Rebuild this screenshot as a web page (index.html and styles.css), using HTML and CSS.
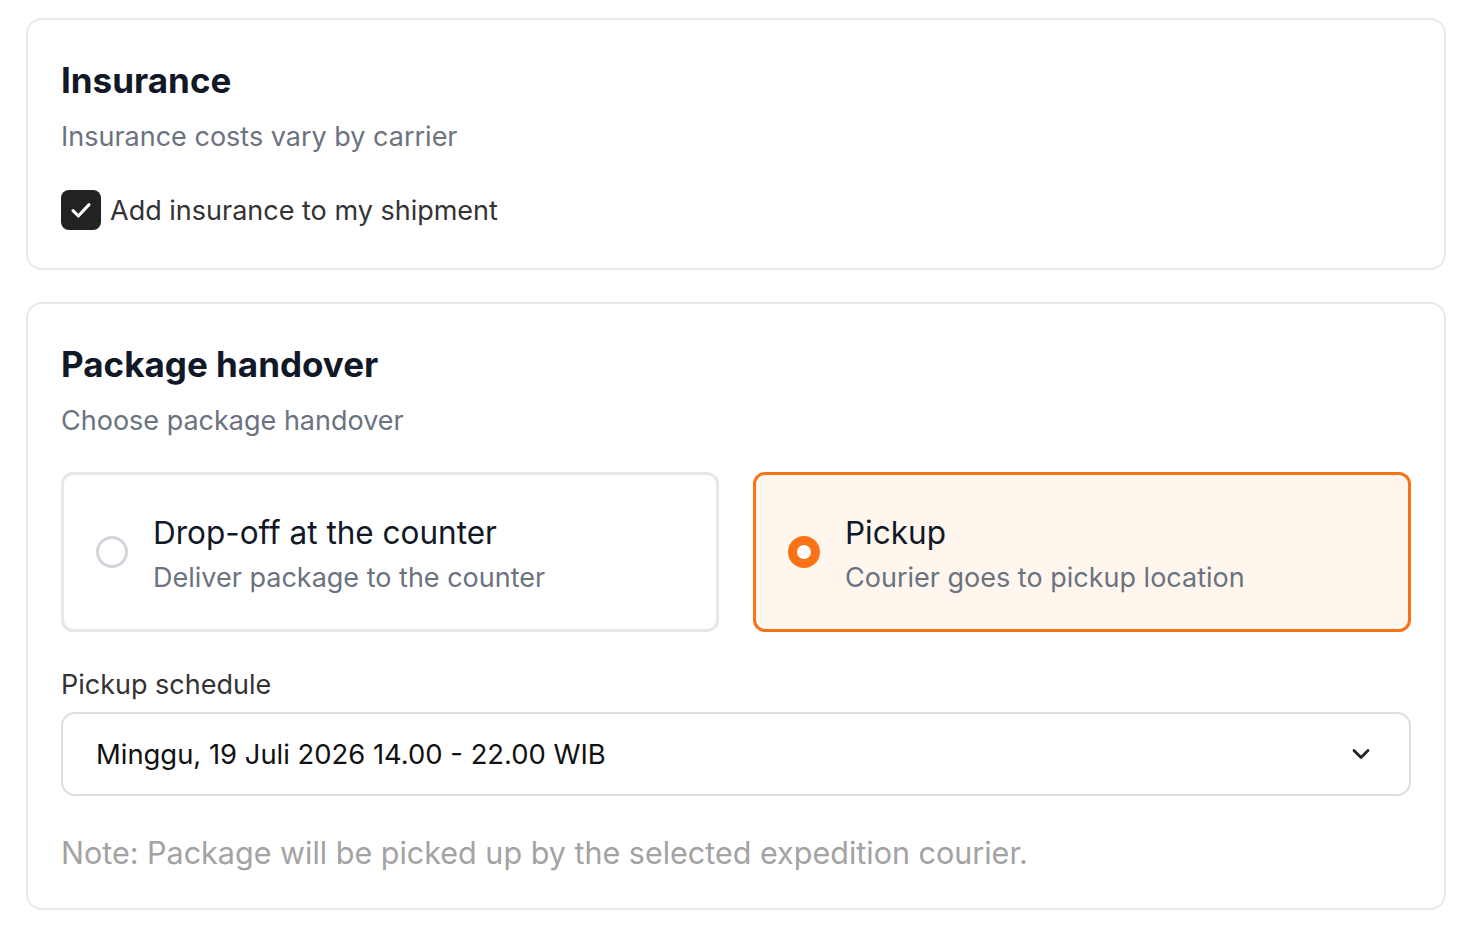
FILE: index.html
```html
<!DOCTYPE html>
<html>

<head>
    <meta charset="utf-8">
    <title>Shipment options</title>
    <link rel="stylesheet" href="styles.css">
</head>

<body>
    <div class="page">
        <div class="card">
            <div class="card-title">Insurance</div>
            <div class="card-subtitle">Insurance costs vary by carrier</div>

            <label class="checkbox">
                <span class="checkbox-box">
                    <svg viewBox="0 0 24 24" width="32" height="32">
                        <path d="M6 12.5l4 4L18 8" fill="none" stroke="white" stroke-width="2.3"
                            stroke-linecap="round" stroke-linejoin="round" />
                    </svg>
                </span>
                <span class="checkbox-label">Add insurance to my shipment</span>
            </label>
        </div>

        <div class="card">
            <div class="card-title">Package handover</div>
            <div class="card-subtitle">Choose package handover</div>

            <div class="options">
                <div class="option">
                    <span class="radio"></span>
                    <div class="option-text">
                        <div class="option-title">Drop-off at the counter</div>
                        <div class="option-desc">Deliver package to the counter</div>
                    </div>
                </div>
                <div class="option selected">
                    <span class="radio"></span>
                    <div class="option-text">
                        <div class="option-title">Pickup</div>
                        <div class="option-desc">Courier goes to pickup location</div>
                    </div>
                </div>
            </div>

            <div class="field-label">Pickup schedule</div>
            <div class="select">
                <span>Minggu, 19 Juli 2026 14.00 - 22.00 WIB</span>
                <svg viewBox="0 0 24 24" width="28" height="28">
                    <path d="M6 9l6 6 6-6" fill="none" stroke="#222" stroke-width="2.4" stroke-linecap="round"
                        stroke-linejoin="round" />
                </svg>
            </div>

            <div class="note">Note: Package will be picked up by the selected expedition courier.</div>
        </div>
    </div>
</body>

</html>
```

FILE: styles.css
```css
body {
    margin: 0;
    font-family: Inter, 'Noto Sans', sans-serif;
    background: white;
    color: #111827;
}

.page {
    display: flex;
    flex-direction: column;
    gap: 32px;
    padding: 18px 30px 20px 26px;
}

.card {
    border: 2px solid #e5e7eb;
    border-radius: 16px;
    padding: 38px 33px;
}

.card-title {
    font-size: 35px;
    font-weight: 700;
    line-height: 44px;
    color: #111827;
}

.card-subtitle {
    font-size: 27px;
    line-height: 36px;
    color: #6b7280;
    margin-top: 17px;
}

.checkbox {
    display: flex;
    align-items: center;
    gap: 9px;
    margin-top: 35px;
}

.checkbox-box {
    width: 40px;
    height: 40px;
    border-radius: 8px;
    background: #222;
    display: flex;
    align-items: center;
    justify-content: center;
}

.checkbox-label {
    font-size: 27px;
    color: #333;
}

.options {
    display: grid;
    grid-template-columns: 1fr 1fr;
    gap: 34px;
    margin-top: 33px;
}

.option {
    display: flex;
    align-items: center;
    gap: 25px;
    height: 160px;
    box-sizing: border-box;
    padding: 0 32px;
    border: 3px solid #e5e7eb;
    border-radius: 12px;
    background: white;
}

.option.selected {
    border-color: #f97316;
    background: #fff6ed;
}

.option-text {
    padding-top: 4px;
}

.radio {
    width: 32px;
    height: 32px;
    box-sizing: border-box;
    border-radius: 50%;
    border: 3px solid #d1d5db;
    background: white;
    flex-shrink: 0;
}

.option.selected .radio {
    border: 9.5px solid #f97316;
}

.option-title {
    font-size: 31.5px;
    line-height: 40px;
    color: #111827;
}

.option-desc {
    font-size: 27px;
    line-height: 36px;
    color: #6b7280;
    margin-top: 7px;
}

.field-label {
    font-size: 27px;
    line-height: 36px;
    color: #333;
    margin-top: 35px;
}

.select {
    display: flex;
    align-items: center;
    justify-content: space-between;
    height: 84px;
    box-sizing: border-box;
    margin-top: 9px;
    padding: 0 34px 0 33px;
    border: 2px solid #dddddd;
    border-radius: 14px;
    font-size: 27.4px;
    color: #111;
}

.note {
    font-size: 30.5px;
    line-height: 34px;
    color: #a3a3a3;
    margin-top: 40px;
}
```
